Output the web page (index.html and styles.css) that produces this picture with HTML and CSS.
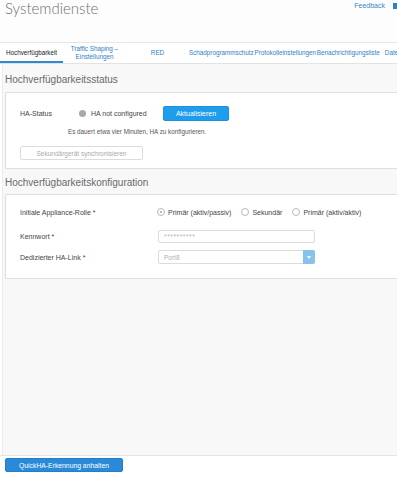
FILE: index.html
```html
<!DOCTYPE html>
<html lang="de">
<head>
    <meta charset="UTF-8">
    <meta name="viewport" content="width=device-width, initial-scale=1.0">
    <title>Systemdienste</title>
    <link rel="stylesheet" href="styles.css">
</head>
<body>

    <div class="page-header">
        <h1 class="page-title">Systemdienste</h1>
        <a class="feedback" href="#">Feedback <span class="feedback-icon"></span></a>
    </div>

    <!-- Reiter -->
    <div class="tabs">
        <div class="tab active">Hochverfügbarkeit</div>
        <div class="tab">Traffic Shaping –<br>Einstellungen</div>
        <div class="tab">RED</div>
        <div class="tab">Schadprogrammschutz</div>
        <div class="tab">Protokolleinstellungen</div>
        <div class="tab">Benachrichtigungsliste</div>
        <div class="tab">Datenbankwartung</div>
    </div>

    <div class="main">
        <h2 class="section-title first">Hochverfügbarkeitsstatus</h2>
        <div class="panel status-panel">
            <div class="status-row">
                <span class="label status-label">HA-Status</span>
                <span class="status">
                    <span class="status-dot"></span>
                    HA not configured
                </span>
                <button class="btn btn-primary">Aktualisieren</button>
            </div>
            <div class="hint">Es dauert etwa vier Minuten, HA zu konfigurieren.</div>
            <button class="btn btn-disabled">Sekundärgerät synchronisieren</button>
        </div>

        <h2 class="section-title">Hochverfügbarkeitskonfiguration</h2>
        <div class="panel config-panel">
            <div class="form-row">
                <span class="label">Initiale Appliance-Rolle *</span>
                <div class="radios">
                    <label class="radio"><span class="radio-circle checked"></span>Primär (aktiv/passiv)</label>
                    <label class="radio"><span class="radio-circle"></span>Sekundär</label>
                    <label class="radio"><span class="radio-circle"></span>Primär (aktiv/aktiv)</label>
                </div>
            </div>
            <div class="form-row">
                <span class="label">Kennwort *</span>
                <div class="input">**********</div>
            </div>
            <div class="form-row">
                <span class="label">Dedizierter HA-Link *</span>
                <div class="select">
                    <span class="select-value">Port8</span>
                    <span class="select-arrow"></span>
                </div>
            </div>
        </div>
    </div>

    <div class="footer">
        <button class="btn btn-footer">QuickHA-Erkennung anhalten</button>
    </div>

</body>
</html>
```

FILE: styles.css
```css
html, body {
    margin: 0;
    height: 480px;
    overflow: hidden;
}
body {
    font-family: "Liberation Sans", Arial, sans-serif;
    color: #444;
    background: #fff;
    display: flex;
    flex-direction: column;
}
.page-header {
    flex: 0 0 42px;
    display: flex;
    justify-content: space-between;
    align-items: flex-start;
    background: #fdfdfd;
}
.page-title {
    margin: 0 0 0 5px;
    font-family: Lato, "Liberation Sans", sans-serif;
    font-weight: 300;
    font-size: 15px;
    line-height: 17px;
    color: #6f6f6f;
}
.feedback {
    display: flex;
    align-items: center;
    margin-top: 2px;
    margin-right: -3px;
    font-size: 7px;
    color: #3a86c8;
    text-decoration: none;
}
.feedback-icon {
    width: 7px;
    height: 6px;
    margin-left: 8px;
    background: #2d7fcf;
}
.tabs {
    flex: 0 0 20px;
    display: flex;
    border-top: 1px solid #e6e6e6;
    border-bottom: 1px solid #e3e3e3;
    background: #fff;
}
.tab {
    flex: 0 0 63px;
    display: flex;
    align-items: center;
    justify-content: center;
    text-align: center;
    white-space: nowrap;
    font-size: 6.3px;
    line-height: 8px;
    color: #2f80c6;
    box-sizing: border-box;
    border-bottom: 2px solid transparent;
    padding-top: 2px;
}
.tab.active {
    color: #222;
    border-bottom-color: #2a8ad4;
}
.main {
    flex: 1;
    background: #f8f8f8;
    margin-left: 2px;
    border-left: 1px solid #ececec;
    padding: 2px 0 0 2px;
}
.section-title {
    margin: 0;
    padding: 7px 0 4px;
    font-size: 10px;
    line-height: 14px;
    font-weight: normal;
    color: #6a6a6a;
}
.panel {
    background: #fff;
    border: 1px solid #dedede;
    border-right: none;
    border-radius: 2px 0 0 2px;
    padding-left: 14px;
}
.status-panel {
    margin-top: 1px;
    height: 62px;
    padding-top: 13px;
}
.status-row {
    display: flex;
    align-items: center;
    height: 15px;
}
.label {
    font-size: 7px;
    color: #444;
}
.status-label {
    width: 59px;
}
.status {
    display: flex;
    align-items: center;
    width: 84px;
    font-size: 7px;
    color: #444;
}
.status-dot {
    width: 7px;
    height: 7px;
    border-radius: 50%;
    background: #a9a9a9;
    margin-right: 5px;
}
.btn {
    font-family: "Liberation Sans", Arial, sans-serif;
    font-size: 6.5px;
    border-radius: 2px;
    padding: 0;
    cursor: pointer;
}
.btn-primary {
    width: 66px;
    height: 15px;
    background: #1f9ded;
    border: 1px solid #1b93df;
    color: #fff;
    font-size: 7px;
}
.hint {
    margin: 6px 0 0 48px;
    font-size: 6.3px;
    line-height: 10px;
    color: #555;
}
.btn-disabled {
    display: block;
    margin-top: 9px;
    width: 123px;
    height: 14px;
    background: #fff;
    border: 1px solid #dcdcdc;
    color: #aaa;
}
.config-panel {
    height: 73px;
    padding-top: 10px;
}
.form-row {
    display: flex;
    align-items: center;
    height: 14px;
    margin-bottom: 7px;
}
.form-row:first-child {
    margin-bottom: 10px;
}
.form-row .label {
    width: 138px;
}
.radios {
    display: flex;
    align-items: center;
    margin-left: -1px;
}
.radio {
    display: flex;
    align-items: center;
    font-size: 7px;
    color: #444;
    margin-right: 10px;
}
.radio-circle {
    box-sizing: border-box;
    width: 8px;
    height: 8px;
    border: 1px solid #b9b9b9;
    border-radius: 50%;
    margin-right: 3px;
    position: relative;
}
.radio-circle.checked::after {
    content: "";
    position: absolute;
    left: 2px;
    top: 2px;
    width: 2px;
    height: 2px;
    border-radius: 50%;
    background: #aaa;
}
.input, .select {
    box-sizing: border-box;
    width: 157px;
    height: 13px;
    border: 1px solid #dcdcdc;
    border-radius: 2px;
    font-size: 6.5px;
    color: #b0b0b0;
    padding-left: 5px;
    display: flex;
    align-items: center;
}
.input {
    letter-spacing: 0.6px;
}
.select {
    height: 14px;
    padding-right: 0;
    justify-content: space-between;
}
.select-arrow {
    width: 12px;
    height: 14px;
    margin: -1px -1px -1px 0;
    border-radius: 0 2px 2px 0;
    background: #86c2ec;
    position: relative;
}
.select-arrow::after {
    content: "";
    position: absolute;
    left: 4px;
    top: 6px;
    border-left: 2.5px solid transparent;
    border-right: 2.5px solid transparent;
    border-top: 3px solid #fff;
}
.footer {
    flex: 0 0 25px;
    box-sizing: border-box;
    display: flex;
    align-items: flex-start;
    border-top: 1px solid #e5e5e5;
    background: #fff;
    padding: 2px 0 0 5px;
}
.btn-footer {
    width: 118px;
    height: 14px;
    background: #2a8ad8;
    border: 1px solid #237fcb;
    color: #fff;
    font-size: 6.8px;
}
```
